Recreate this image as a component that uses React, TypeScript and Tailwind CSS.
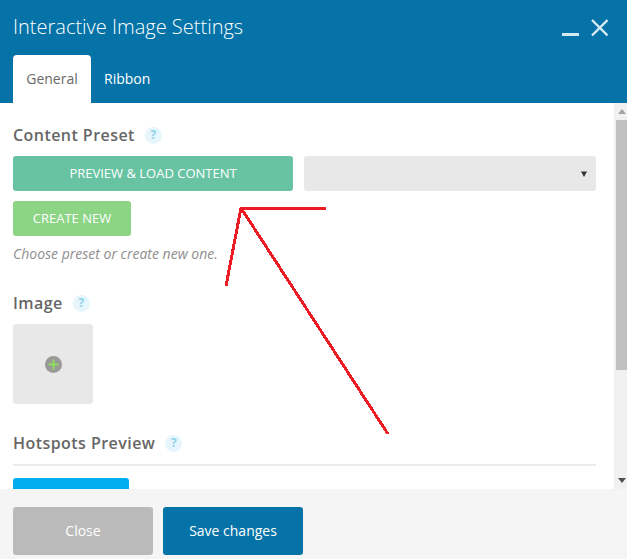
const font = "font-['Open_Sans',sans-serif]"

function Help() {
  return (
    <span className="ml-[10px] flex h-[17px] w-[17px] items-center justify-center rounded-full bg-[#e6f6fc] text-[12px] font-bold leading-none tracking-normal text-[#8fd3ea]">
      ?
    </span>
  )
}

function SectionTitle({ label }: { label: string }) {
  return (
    <div className="flex h-[22px] items-center text-[16px] font-semibold tracking-[0.45px] text-[#666666]">
      <span>{label}</span>
      <Help />
    </div>
  )
}

function Scrollbar() {
  return (
    <div className="flex w-[13px] shrink-0 flex-col items-end bg-[#f1f1f1]">
      <div className="flex h-[17px] w-full items-center justify-center pl-[2px]">
        <svg width="8" height="5" viewBox="0 0 8 5">
          <path d="M4 0L8 5H0Z" fill="#a3a3a3" />
        </svg>
      </div>
      <div className="h-[250px] w-[11px] bg-[#c1c1c1]" />
      <div className="flex-1" />
      <div className="flex h-[17px] w-full items-center justify-center pl-[2px]">
        <svg width="8" height="5" viewBox="0 0 8 5">
          <path d="M0 0H8L4 5Z" fill="#505050" />
        </svg>
      </div>
    </div>
  )
}

export default function App() {
  return (
    <div className={`${font} relative flex h-[559px] w-[627px] flex-col overflow-hidden bg-white`}>
      {/* Header */}
      <div className="h-[103px] shrink-0 bg-[#0573a8] pl-[13px]">
        <div className="flex h-[55px] items-start justify-between pr-[19px]">
          <h1 className="pt-[12px] text-[20px] font-light leading-[30px] text-white">Interactive Image Settings</h1>
          <div className="flex items-start gap-[11px] pt-[19px]">
            <div className="mt-[14px] h-[3px] w-[17px] bg-[#d2e8f2]" />
            <svg width="18" height="18" viewBox="0 0 18 18">
              <path d="M2 1L17.5 16.5M17.5 1L2 16.5" stroke="#d8ebf4" strokeWidth="2.4" fill="none" />
            </svg>
          </div>
        </div>
        <div className="flex h-[48px] text-[14px]">
          <div className="flex w-[78px] items-center justify-center rounded-t-[4px] bg-white pb-[2px] text-[#6a6a6a]">General</div>
          <div className="flex items-center pb-[2px] pl-[13px] font-medium text-white">Ribbon</div>
        </div>
      </div>

      {/* Body */}
      <div className="flex min-h-0 flex-1">
        <div className="min-w-0 flex-1 overflow-hidden pl-[13px] pr-[18px] pt-[21px]">
          <SectionTitle label="Content Preset" />
          <div className="mt-[10px] flex gap-[11px]">
            <div className="flex h-[35px] w-[280px] items-center justify-center rounded-[3px] bg-[#68c3a3] text-[13px] text-white">
              PREVIEW &amp; LOAD CONTENT
            </div>
            <div className="flex h-[35px] flex-1 items-center justify-end rounded-[3px] bg-[#e8e8e8] pr-[9px]">
              <svg width="6" height="6" viewBox="0 0 6 6">
                <path d="M0 0.5H6L3 6Z" fill="#333333" />
              </svg>
            </div>
          </div>
          <div className="mt-[10px] flex h-[35px] w-[118px] items-center justify-center rounded-[3px] bg-[#8bd585] text-[13px] text-white">
            CREATE NEW
          </div>
          <p className="mt-[7px] text-[14px] italic leading-[22px] text-[#8e8e8e]">Choose preset or create new one.</p>

          <div className="mt-[27px]">
            <SectionTitle label="Image" />
          </div>
          <div className="mt-[10px] flex h-[80px] w-[80px] items-center justify-center rounded-[3px] bg-[#e8e8e8]">
            <svg width="17" height="17" viewBox="0 0 17 17">
              <circle cx="8.5" cy="8.5" r="8.5" fill="#999999" />
              <path d="M8.5 3.5V13.5M3.5 8.5H13.5" stroke="#8fdc5e" strokeWidth="2" />
            </svg>
          </div>

          <div className="mt-[28px]">
            <SectionTitle label="Hotspots Preview" />
          </div>
          <div className="mt-[10px] border-t-2 border-[#ececec]" />
          <div className="mt-[12px] h-[36px] w-[116px] rounded-[3px] bg-[#00adef]" />
        </div>
        <Scrollbar />
      </div>

      {/* Footer */}
      <div className="flex h-[70px] shrink-0 gap-[10px] bg-[#f5f5f5] pl-[13px] pt-[18px]">
        <div className="flex h-[48px] w-[140px] items-center justify-center rounded-[3px] bg-[#bababa] pb-[2px] text-[14px] font-medium text-white">Close</div>
        <div className="flex h-[48px] w-[140px] items-center justify-center rounded-[3px] bg-[#0573a8] pb-[2px] text-[14px] font-medium text-white">Save changes</div>
      </div>

      {/* Red arrow scribbled over the screenshot */}
      <svg className="absolute left-0 top-0" width="627" height="559" viewBox="0 0 627 559" fill="none">
        <path d="M326 208H241L226 286M241 208L388 434" stroke="#ed1c24" strokeWidth="3" shapeRendering="crispEdges" />
      </svg>
    </div>
  )
}
